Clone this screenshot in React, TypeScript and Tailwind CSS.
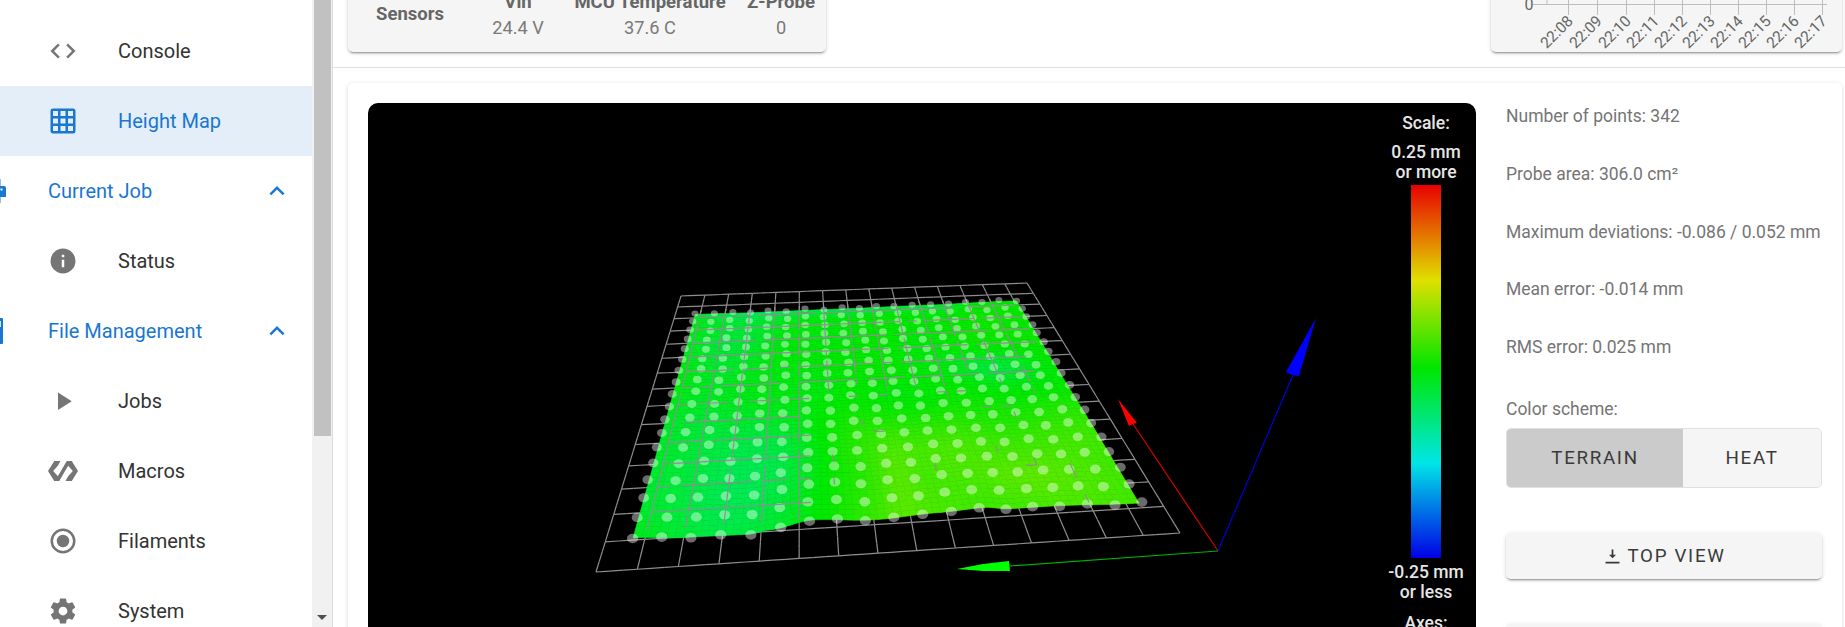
import React from "react";

const P = {
  code: "M14.6,16.6L19.2,12L14.6,7.4L16,6L22,12L16,18L14.6,16.6M9.4,16.6L4.8,12L9.4,7.4L8,6L2,12L8,18L9.4,16.6Z",
  grid: "M10,4V8H14V4H10M16,4V8H20V4H16M16,10V14H20V10H16M16,16V20H20V16H16M14,20V16H10V20H14M8,20V16H4V20H8M8,14V10H4V14H8M8,8V4H4V8H8M10,14H14V10H10V14M4,2H20A2,2 0 0,1 22,4V20A2,2 0 0,1 20,22H4C2.92,22 2,21.1 2,20V4A2,2 0 0,1 4,2Z",
  info: "M13,9H11V7H13M13,17H11V11H13M12,2A10,10 0 0,0 2,12A10,10 0 0,0 12,22A10,10 0 0,0 22,12A10,10 0 0,0 12,2Z",
  play: "M8,5.14V19.14L19,12.14L8,5.14Z",
  polymer: "M19,4H15L7.88,16.19L4.16,12L7.88,7.81L10,4H5L0,12L5,20H9L16.12,7.81L19.84,12L16.12,16.19L14,20H19L24,12L19,4Z",
  radio: "M12,20A8,8 0 0,1 4,12A8,8 0 0,1 12,4A8,8 0 0,1 20,12A8,8 0 0,1 12,20M12,2A10,10 0 0,0 2,12A10,10 0 0,0 12,22A10,10 0 0,0 22,12A10,10 0 0,0 12,2M12,7A5,5 0 0,0 7,12A5,5 0 0,0 12,17A5,5 0 0,0 17,12A5,5 0 0,0 12,7Z",
  cog: "M12,15.5A3.5,3.5 0 0,1 8.5,12A3.5,3.5 0 0,1 12,8.5A3.5,3.5 0 0,1 15.5,12A3.5,3.5 0 0,1 12,15.5M19.43,12.97C19.47,12.65 19.5,12.33 19.5,12C19.5,11.67 19.47,11.34 19.43,11L21.54,9.37C21.73,9.22 21.78,8.95 21.66,8.73L19.66,5.27C19.54,5.05 19.27,4.96 19.05,5.05L16.56,6.05C16.04,5.66 15.5,5.32 14.87,5.07L14.5,2.42C14.46,2.18 14.25,2 14,2H10C9.75,2 9.54,2.18 9.5,2.42L9.13,5.07C8.5,5.32 7.96,5.66 7.44,6.05L4.95,5.05C4.73,4.96 4.46,5.05 4.34,5.27L2.34,8.73C2.21,8.95 2.27,9.22 2.46,9.37L4.57,11C4.53,11.34 4.5,11.67 4.5,12C4.5,12.33 4.53,12.65 4.57,12.97L2.46,14.63C2.27,14.78 2.21,15.05 2.34,15.27L4.34,18.73C4.46,18.95 4.73,19.03 4.95,18.95L7.44,17.94C7.96,18.34 8.5,18.68 9.13,18.93L9.5,21.58C9.54,21.82 9.75,22 10,22H14C14.25,22 14.46,21.82 14.5,21.58L14.87,18.93C15.5,18.67 16.04,18.34 16.56,17.94L19.05,18.95C19.27,19.03 19.54,18.95 19.66,18.73L21.66,15.27C21.78,15.05 21.73,14.78 21.54,14.63L19.43,12.97Z",
  chevron: "M7.41,15.41L12,10.83L16.59,15.41L18,14L12,8L6,14L7.41,15.41Z",
  bottom: "M13,10H16L12,14L8,10H11V4H13V10M4,20H20V18H4V20Z",
};

function Icon({ d, className }: { d: string; className: string }) {
  return (
    <svg viewBox="0 0 24 24" className={className} fill="currentColor">
      <path d={d} />
    </svg>
  );
}

function NavItem({ icon, label, active }: { icon: string; label: string; active?: boolean }) {
  return (
    <div className={active ? "flex h-[70px] items-center bg-[#e3eef8] pl-[48px] text-[#1976d2]" : "flex h-[70px] items-center pl-[48px] text-[#333333]"}>
      <Icon d={icon} className={active ? "mr-[40px] h-[30px] w-[30px] shrink-0 text-[#1976d2]" : "mr-[40px] h-[30px] w-[30px] shrink-0 text-[#757575]"} />
      <span className="text-[20px]">{label}</span>
    </div>
  );
}

function NavGroup({ label, glyph, textClass }: { label: string; glyph: React.ReactNode; textClass: string }) {
  return (
    <div className="flex h-[70px] items-center pr-[20px] text-[#1976d2]">
      {glyph}
      <span className={textClass}>{label}</span>
      <Icon d={P.chevron} className="h-[30px] w-[30px]" />
    </div>
  );
}

function homography(q: number[][]) {
  const [[x0, y0], [x1, y1], [x2, y2], [x3, y3]] = q;
  const dx1 = x1 - x2, dx2 = x3 - x2, sx = x0 - x1 + x2 - x3;
  const dy1 = y1 - y2, dy2 = y3 - y2, sy = y0 - y1 + y2 - y3;
  const den = dx1 * dy2 - dx2 * dy1;
  const g = (sx * dy2 - dx2 * sy) / den;
  const h = (dx1 * sy - sx * dy1) / den;
  const a = x1 - x0 + g * x1, b = x3 - x0 + h * x3, c = x0;
  const d = y1 - y0 + g * y1, e = y3 - y0 + h * y3, f = y0;
  return (u: number, v: number): [number, number] => {
    const w = g * u + h * v + 1;
    return [(a * u + b * v + c) / w, (d * u + e * v + f) / w];
  };
}

const smooth = (x: number, a: number, b: number) => {
  const t = Math.min(1, Math.max(0, (x - a) / (b - a)));
  return t * t * (3 - 2 * t);
};
const gauss = (x: number, y: number, sx: number, sy: number) => Math.exp(-(x * x) / (2 * sx * sx) - (y * y) / (2 * sy * sy));

function height(u: number, v: number) {
  return (
    -0.001 +
    0.042 * smooth(v, 0.5, 0.82) * smooth(u, 0.26, 0.5) +
    0.01 * gauss(u - 0.95, v - 0.15, 0.1, 0.15) -
    0.042 * gauss(u - 0.18, v - 0.86, 0.16, 0.17) -
    0.04 * gauss(u - 0.42, v - 0.0, 0.3, 0.04) -
    0.028 * gauss(u - 0.12, v - 0.16, 0.12, 0.14) -
    0.015 * gauss(u - 0.12, v - 0.55, 0.1, 0.16) -
    0.03 * gauss(u - 0.82, v - 0.42, 0.08, 0.06) +
    0.018 * gauss(u - 0.52, v - 0.88, 0.03, 0.12) +
    0.014 * gauss(u - 0.78, v - 0.9, 0.06, 0.05) +
    0.003 * Math.sin(u * 23 + v * 7) +
    0.002 * Math.sin(v * 19 - u * 11)
  );
}

function colour(h: number) {
  const t = h / 0.25;
  if (t >= 0) return `rgb(${Math.min(230, Math.round(420 * t))},234,0)`;
  return `rgb(0,234,${Math.min(230, Math.round(-460 * t))})`;
}

const dotMap = homography([[695, 313], [1017, 300], [1141, 503], [632, 537]]);
const gridMap = homography([[681, 296], [1027, 283], [1180, 533], [596, 572]]);

const EDGE: [number, number][] = [[0, 1], [0.1, 4], [0.22, 5], [0.26, 2], [0.34, -5], [0.46, -1], [0.59, -4], [0.68, -6], [0.73, -3], [0.8, -3], [1, 0]];
function frontEdge(u: number) {
  for (let i = 1; i < EDGE.length; i++) {
    if (u <= EDGE[i][0]) {
      const [a, p] = EDGE[i - 1], [b, q] = EDGE[i];
      return p + (q - p) * smooth(u, a, b);
    }
  }
  return 0;
}

function surfacePoint(u: number, v: number): [number, number] {
  const [x, y] = dotMap(u, v);
  const sf = smooth(v, 0.62, 1);
  return [x, y - height(u, v) * 25 * (1 - sf) + frontEdge(u) * sf];
}

function Surface() {
  const quads: React.ReactNode[] = [];
  const N = 64;
  const u0 = 0.002, u1 = 0.996, v0 = 0.006, v1 = 1;
  for (let i = 0; i < N; i++) {
    for (let j = 0; j < N; j++) {
      const a = u0 + ((u1 - u0) * i) / N, b = u0 + ((u1 - u0) * (i + 1)) / N;
      const c = v0 + ((v1 - v0) * j) / N, d = v0 + ((v1 - v0) * (j + 1)) / N;
      const pts = [surfacePoint(a, c), surfacePoint(b, c), surfacePoint(b, d), surfacePoint(a, d)]
        .map((p) => `${p[0].toFixed(1)},${p[1].toFixed(1)}`)
        .join(" ");
      const col = colour(height((a + b) / 2, (c + d) / 2));
      quads.push(<polygon key={`${i}-${j}`} points={pts} fill={col} stroke={col} strokeWidth={0.6} />);
    }
  }
  return <g>{quads}</g>;
}

function GridLines({ top }: { top: boolean }) {
  const lines: React.ReactNode[] = [];
  const n = 15;
  const seg = (a: [number, number], b: [number, number], k: string) => (
    <line key={k} x1={a[0]} y1={a[1]} x2={b[0]} y2={b[1]} stroke="#8f8f8f" strokeWidth={1.2} />
  );
  const visible = (gu: number, gv: number, seed: number) => {
    const su = (gu - 0.055) / 0.885, sv = (gv - 0.075) / 0.86;
    if (su < 0.01 || su > 0.985 || sv < 0.01 || sv > 0.98) return false;
    const noise = Math.sin(seed * 12.9898) * 43758.5453;
    const r = noise - Math.floor(noise);
    if (sv < 0.52) return r > 0.14;
    if (su < 0.34) return r > 0.08;
    return r < 0.07;
  };
  for (let i = 0; i <= n; i++) {
    for (let j = 0; j < n; j++) {
      for (let s = 0; s < 3; s++) {
        const t0 = (j + s / 3) / n, t1 = (j + (s + 1) / 3) / n;
        const g = i / n;
        const seedA = i * 97 + j * 13 + s * 3 + 1;
        const seedB = i * 41 + j * 71 + s * 5 + 2;
        if (!top || visible(g, (t0 + t1) / 2, seedA)) lines.push(seg(gridMap(g, t0), gridMap(g, t1), `a${i}-${j}-${s}`));
        if (!top || visible((t0 + t1) / 2, g, seedB)) lines.push(seg(gridMap(t0, g), gridMap(t1, g), `b${i}-${j}-${s}`));
      }
    }
  }
  return <g>{lines}</g>;
}

function Dots() {
  const dots: React.ReactNode[] = [];
  for (let i = 0; i < 19; i++) {
    for (let j = 0; j < 18; j++) {
      const u = i / 18, v = j / 17;
      const [x, y] = surfacePoint(u, v);
      const jx = Math.sin(i * 7.3 + j * 3.1) * 0.9, jy = Math.sin(i * 2.9 + j * 5.7) * 0.9;
      const r = 3.3 + 1.9 * v;
      dots.push(<ellipse key={`${i}-${j}`} cx={x + jx} cy={y + jy} rx={r * 1.08} ry={r * 0.92} fill="#ffffff" fillOpacity={0.42} />);
    }
  }
  return <g>{dots}</g>;
}

function HeightMapDrawing() {
  return (
    <svg viewBox="368 103 1008 560" className="block h-[560px] w-[1008px] shrink-0">
      <GridLines top={false} />
      <Surface />
      <Dots />
      <GridLines top={true} />
      <line x1={1218} y1={551} x2={1133} y2={424} stroke="#d80000" strokeWidth={1.2} />
      <polygon points="1118,399 1137,423 1133,424 1129,426" fill="#ff0000" />
      <line x1={1218} y1={551} x2={1293} y2={375} stroke="#0000d8" strokeWidth={1.2} />
      <polygon points="1316,318 1299,376 1292,375 1286,372" fill="#0000ff" />
      <line x1={1218} y1={551} x2={1010} y2={566} stroke="#00b000" strokeWidth={1.2} />
      <polygon points="957,569 983,564 1009,561 1010,571 983,571" fill="#00ff00" />
    </svg>
  );
}

function TimeAxis() {
  const xs = [1568, 1597, 1626, 1654, 1682, 1710, 1738, 1766, 1794, 1822];
  const labels = ["22:08", "22:09", "22:10", "22:11", "22:12", "22:13", "22:14", "22:15", "22:16", "22:17"];
  return (
    <svg viewBox="1491 0 351 52" className="block h-[52px] w-[351px]">
      <line x1={1533} y1={4.5} x2={1827} y2={4.5} stroke="#bdbdbd" />
      <line x1={1547} y1={0} x2={1547} y2={5} stroke="#bdbdbd" />
      {xs.map((x) => (
        <line key={x} x1={x + 0.5} y1={0} x2={x + 0.5} y2={15} stroke="#bdbdbd" />
      ))}
      <text x={1529} y={10} fontSize={16} fill="#666" textAnchor="middle" fontFamily="Roboto, sans-serif">0</text>
      {labels.map((l, i) => (
        <text key={l} x={xs[i] + 6} y={22} fontSize={15.5} fill="#666" textAnchor="end" fontFamily="Roboto, sans-serif" transform={`rotate(-45 ${xs[i] + 6} 22)`}>
          {l}
        </text>
      ))}
    </svg>
  );
}

function SensorCol({ head, value, className }: { head: string; value: string; className: string }) {
  return (
    <div className={`flex flex-col items-center leading-[25px] ${className}`}>
      <span className="text-[18.5px] font-bold text-[#666]">{head}</span>
      <span className="text-[18.2px] text-[#7a7a7a]">{value}</span>
    </div>
  );
}

export default function App() {
  const cardShadow = "shadow-[0_3px_1px_-2px_rgba(0,0,0,0.2),0_2px_2px_0_rgba(0,0,0,0.14),0_1px_5px_0_rgba(0,0,0,0.12)]";
  return (
    <div className="flex h-[627px] w-[1845px] overflow-hidden bg-white font-[Roboto,sans-serif]">
      <aside className="w-[312px] shrink-0 overflow-hidden pt-4">
        <NavItem icon={P.code} label="Console" />
        <NavItem icon={P.grid} label="Height Map" active />
        <NavGroup
          label="Current Job"
          textClass="flex-1 pl-[42px] text-[20px]"
          glyph={
            <svg viewBox="0 0 6 24" className="h-6 w-[6px] shrink-0" fill="#1976d2">
              <rect x={0} y={0} width={1} height={24} fill="#90c0ee" />
              <path d="M0 7H4Q6 7 6 9V18H0Z" />
              <rect x={0.5} y={9.5} width={2} height={2} fill="#ffffff" />
            </svg>
          }
        />
        <NavItem icon={P.info} label="Status" />
        <NavGroup
          label="File Management"
          textClass="flex-1 pl-[45px] text-[20px]"
          glyph={
            <svg viewBox="0 0 3 26" className="h-[26px] w-[3px] shrink-0" fill="#1976d2">
              <path d="M0 0H2Q3 0 3 1V25Q3 26 2 26H0Z" />
              <rect x={0} y={3} width={1} height={6} fill="#cfe3f7" />
            </svg>
          }
        />
        <NavItem icon={P.play} label="Jobs" />
        <NavItem icon={P.polymer} label="Macros" />
        <NavItem icon={P.radio} label="Filaments" />
        <NavItem icon={P.cog} label="System" />
      </aside>

      <div className="relative flex w-[20px] shrink-0 flex-col items-center bg-[#f1f1f1]">
        <div className="h-[436px] w-[17px] bg-[#c1c1c1]" />
        <div className="mt-auto mb-[7px] h-0 w-0 border-x-[5px] border-t-[5px] border-x-transparent border-t-[#505050]" />
      </div>

      <main className="min-w-0 flex-1 border-l border-[#dcdcdc]">
        <div className="flex justify-between pr-[3px] pl-[15px]">
          <div className={`-mt-[48px] flex h-[100px] w-[478px] items-end rounded-[5px] bg-[#f5f5f5] pb-3 ${cardShadow}`}>
            <div className="flex h-[50px] w-full items-center">
              <div className="-mt-[1px] w-[124px] pl-[28px] text-[18.5px] font-bold text-[#666]">Sensors</div>
              <SensorCol head="Vin" value="24.4 V" className="w-[92px]" />
              <SensorCol head="MCU Temperature" value="37.6 C" className="w-[172px]" />
              <SensorCol head="Z-Probe" value="0" className="w-[90px]" />
            </div>
          </div>
          <div className={`-mt-[48px] flex h-[100px] w-[351px] items-end rounded-[5px] bg-[#f5f5f5] ${cardShadow}`}>
            <TimeAxis />
          </div>
        </div>

        <div className="mt-[15px] border-t border-[#e0e0e0]" />

        <div className="mt-[15px] mr-[3px] ml-[15px] flex h-[620px] gap-[30px] rounded-[5px] bg-white p-5 shadow-[0_1px_4px_rgba(0,0,0,0.16)]">
          <div className="flex w-[1108px] shrink-0 overflow-hidden rounded-[10px] bg-black">
            <HeightMapDrawing />
            <div className="flex w-[100px] flex-col items-center pt-[10px] text-center text-[17.5px] leading-[20px] font-medium text-[#e6e6e6]">
              <div>Scale:</div>
              <div className="mt-[9px]">0.25 mm</div>
              <div>or more</div>
              <div className="mt-[3px] h-[373px] w-[30px] shrink-0 bg-[linear-gradient(to_bottom,#e80000_0%,#e0e000_25.5%,#00e600_49%,#00e6e6_74.5%,#0000e6_100%)]" />
              <div className="mt-[4px]">-0.25 mm</div>
              <div>or less</div>
              <div className="mt-[11px]">Axes:</div>
            </div>
          </div>

          <div className="flex w-[316px] shrink-0 flex-col pt-[1px] text-[17.5px] leading-[24px] text-[#757575]">
            <div className="flex flex-col gap-[33.75px]">
              <div>Number of points: 342</div>
              <div>Probe area: 306.0 cm²</div>
              <div>Maximum deviations: -0.086 / 0.052 mm</div>
              <div>Mean error: -0.014 mm</div>
              <div>RMS error: 0.025 mm</div>
            </div>
            <div className="mt-[38px]">Color scheme:</div>
            <div className="mt-[7px] flex h-[60px] overflow-hidden rounded-[5px] border border-[#e0e0e0] text-[18.75px] tracking-[0.09em] text-[#3a3a3a]">
              <div className="flex w-[176px] items-center justify-center bg-[#cbcbcb]">TERRAIN</div>
              <div className="flex flex-1 items-center justify-center bg-[#f5f5f5]">HEAT</div>
            </div>
            <div className={`mt-[45px] flex h-[46px] items-center justify-center gap-[4px] rounded-[5px] bg-[#f5f5f5] text-[18.75px] tracking-[0.09em] text-[#3a3a3a] ${cardShadow}`}>
              <Icon d={P.bottom} className="h-[21px] w-[21px]" />
              <span>TOP VIEW</span>
            </div>
            <div className={`mt-[45px] h-[46px] shrink-0 rounded-[5px] bg-[#f5f5f5] ${cardShadow}`} />
          </div>
        </div>
      </main>
    </div>
  );
}
